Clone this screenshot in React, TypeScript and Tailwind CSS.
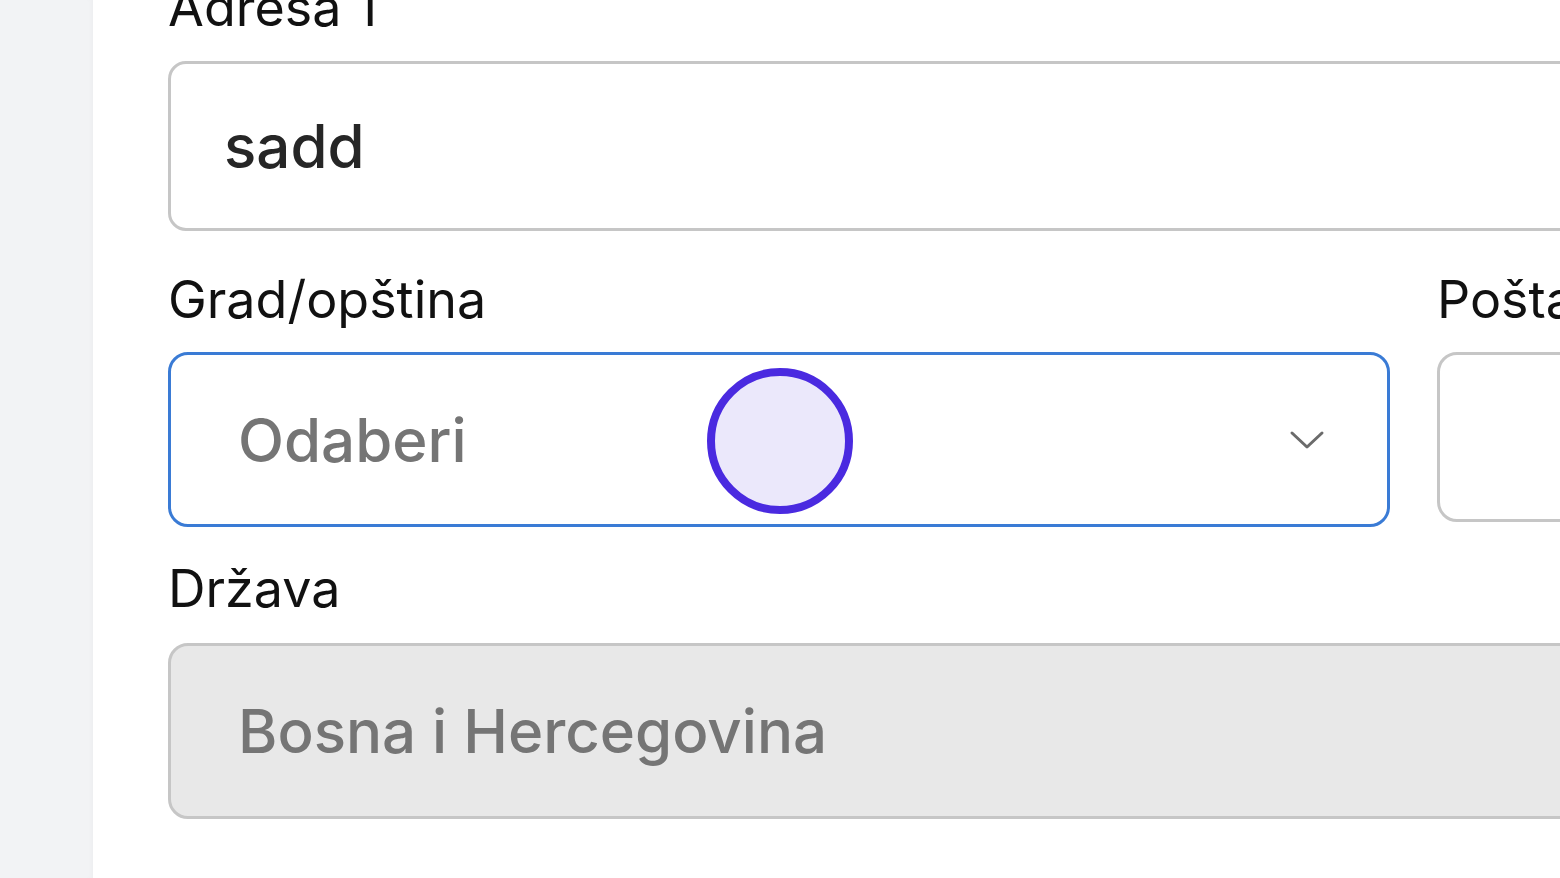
import React from 'react';

const labelCls =
  "block text-[52px] leading-none text-[#111111] font-['Inter','Helvetica','Arial',sans-serif]";

const App: React.FC = () => {
  return (
    <div className="flex h-[878px] w-[1560px] overflow-hidden bg-white font-['Inter','Helvetica','Arial',sans-serif]">
      {/* sidebar edge */}
      <div className="w-[93px] shrink-0 bg-[#f2f3f5] shadow-[inset_-4px_0_6px_-4px_rgba(0,0,0,0.04)]" />

      <div className="flex-1 pl-[75px]">
        <div className="-mt-[18px] w-[1500px]">
          {/* Adresa 1 */}
          <label className={labelCls}>Adresa 1</label>
          <div className="mt-[27px] flex h-[170px] items-center rounded-[18px] border-[3px] border-[#c6c6c6] bg-white pl-[53px]">
            <span className="text-[60px] font-medium text-[#262626]">sadd</span>
          </div>

          {/* Grad / Pošta row */}
          <div className="mt-[43px] flex items-start gap-[47px]">
            <div className="w-[1222px] shrink-0">
              <label className={labelCls}>Grad/opština</label>
              <div className="relative mt-[26px] flex h-[175px] items-center rounded-[20px] border-[3px] border-[#3a7bd5] bg-white pl-[67px] pr-[64px]">
                <span className="flex-1 text-[60px] font-medium text-[#757575]">Odaberi</span>
                <svg width="36" height="20" viewBox="0 0 36 20" className="mr-[-2px]">
                  <path d="M3 3 L18 17 L33 3" fill="none" stroke="#6b6b6b" strokeWidth="3" strokeLinecap="round" strokeLinejoin="round" />
                </svg>
                {/* touch indicator */}
                <div className="absolute left-[536px] top-[13px] h-[146px] w-[146px] rounded-full border-[8px] border-[#4a2ae0] bg-[#ebe8fb]" />
              </div>
            </div>
            <div className="flex-1">
              <label className={labelCls}>Pošta</label>
              <div className="mt-[26px] h-[170px] rounded-[20px] border-[3px] border-[#c6c6c6] bg-white" />
            </div>
          </div>

          {/* Država */}
          <div className="mt-[36px]">
            <label className={labelCls}>Država</label>
            <div className="mt-[28px] flex h-[176px] items-center rounded-[20px] border-[3px] border-[#c6c6c6] bg-[#e8e8e8] pl-[67px]">
              <span className="text-[60px] font-medium text-[#757575]">Bosna i Hercegovina</span>
            </div>
          </div>
        </div>
      </div>
    </div>
  );
};

export default App;
